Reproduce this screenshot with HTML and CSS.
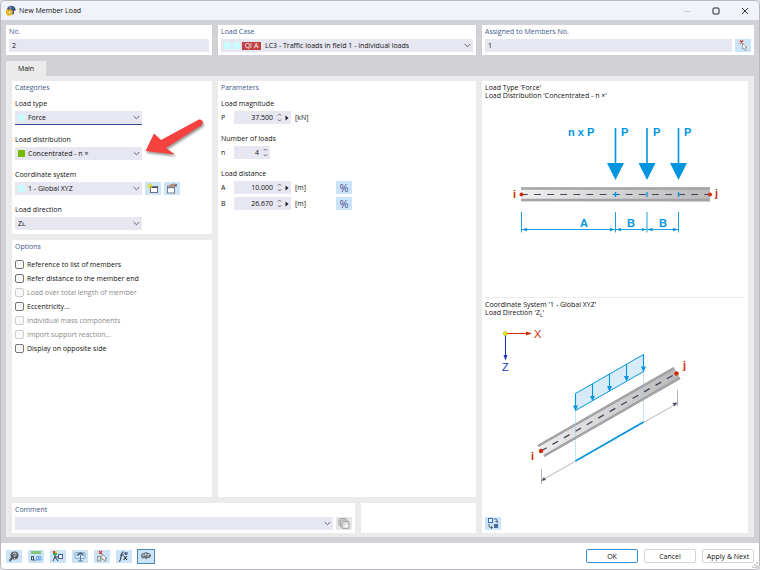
FILE: index.html
```html
<!doctype html>
<html lang="en">
  <head>
    <meta charset="utf-8">
    <title>New Member Load</title>
    <link rel="stylesheet" href="styles.css">
  </head>
  <body>
    <div class="window">
      <header class="titlebar">
        <svg class="app-icon" width="11" height="11" viewBox="0 0 11 11">
          <path d="M1 4 C2 0 8 0 9 3 L10 5 L8 6 L8 9 L5 10 Z" fill="#3c5580"/>
          <path d="M2 3 L5 1 L6 4 Z" fill="#7790b4"/>
          <path d="M0 4 L3 5 L4 4 L7 6 L6 10 L2 11 L0 9 Z" fill="#efb927"/>
          <circle cx="3.5" cy="7.5" r="1.4" fill="#fff0a0" stroke="#a3822c" stroke-width=".5"/>
        </svg>
        <h1>New Member Load</h1>
        <div class="window-buttons">
          <button aria-label="Minimize"><svg width="8" height="8" viewBox="0 0 8 8"><path d="M1 4.5H7" stroke="#c9cbd2"/></svg></button>
          <button aria-label="Maximize"><svg width="8" height="8" viewBox="0 0 8 8"><rect x="1" y="1" width="6" height="6" rx="1" fill="none" stroke="#222"/></svg></button>
          <button aria-label="Close"><svg width="8" height="8" viewBox="0 0 8 8"><path d="M1 1L7 7M7 1L1 7" stroke="#222" stroke-width=".9"/></svg></button>
        </div>
      </header>

      <main>
        <div class="top-row">
          <section class="panel">
            <label class="panel-title" for="no">No.</label>
            <input class="field" id="no" type="text" value="2">
          </section>
          <section class="panel">
            <label class="panel-title" for="load-case">Load Case</label>
            <div class="combo load-case">
              <select id="load-case"><option>LC3 - Traffic loads in field 1 - individual loads</option></select>
              <div class="marks"><i class="swatch"></i><i class="swatch"></i><span class="badge">QI A</span></div>
              <svg class="chevron" viewBox="0 0 7 5"><path d="M.7 1L3.5 3.8L6.3 1"/></svg>
            </div>
          </section>
          <section class="panel">
            <label class="panel-title" for="members">Assigned to Members No.</label>
            <div class="row">
              <input class="field" id="members" type="text" value="1">
              <button class="tool" aria-label="Select members"><svg viewBox="0 0 16 13"><path d="M5 1.500L8 4.500M8 1.500L5 4.500" stroke="#e22929" stroke-width="1.2"/><path d="M7.500 4.500V10L9 9L10.500 11.500L11.500 11L10.500 8.500H12Z" fill="#fff" stroke="#777" stroke-width=".6"/></svg></button>
            </div>
          </section>
        </div>

        <nav class="tabs"><button class="tab">Main</button></nav>

        <div class="page">
          <div class="forms">
            <div class="columns">
              <div class="left">
                <section class="panel categories">
                  <h2 class="panel-title">Categories</h2>
                  <div class="group">
                    <label for="type">Load type</label>
                    <div class="combo marked active">
                      <select id="type"><option>Force</option></select>
                      <div class="marks"><i class="swatch"></i></div>
                      <svg class="chevron" viewBox="0 0 7 5"><path d="M.7 1L3.5 3.8L6.3 1"/></svg>
                    </div>
                  </div>
                  <div class="group">
                    <label for="distribution">Load distribution</label>
                    <div class="combo marked">
                      <select id="distribution"><option>Concentrated - n ×</option></select>
                      <div class="marks"><i class="swatch green"></i></div>
                      <svg class="chevron" viewBox="0 0 7 5"><path d="M.7 1L3.5 3.8L6.3 1"/></svg>
                    </div>
                  </div>
                  <div class="group">
                    <label for="system">Coordinate system</label>
                    <div class="row">
                      <div class="combo marked">
                        <select id="system"><option>1 - Global XYZ</option></select>
                        <div class="marks"><i class="swatch"></i></div>
                        <svg class="chevron" viewBox="0 0 7 5"><path d="M.7 1L3.5 3.8L6.3 1"/></svg>
                      </div>
                      <button class="tool" aria-label="New coordinate system"><svg viewBox="0 0 16 13"><rect x="5.500" y="4.500" width="7" height="6" fill="#fff" stroke="#6b7083"/><path d="M5 5.500H13" stroke="#4b5170"/><path d="M5 1V7M2 4H8M3 2L7 6M7 2L3 6" stroke="#e0d91c" stroke-width=".9"/></svg></button>
                      <button class="tool" aria-label="Edit coordinate system"><svg viewBox="0 0 16 13"><rect x="3.500" y="4" width="7" height="7" fill="#fff" stroke="#777b88"/><path d="M3 5.500H10" stroke="#777b88" stroke-width="1.400"/><path d="M5 3L9 1.500L12 2V4.500L9 4.500L7 6Z" fill="#b58b77"/><path d="M11 2H13V4.500H11" fill="#6d7f9c"/></svg></button>
                    </div>
                  </div>
                  <div class="group">
                    <label for="direction">Load direction</label>
                    <div class="combo">
                      <select id="direction"><option>Zʟ</option></select>
                      <svg class="chevron" viewBox="0 0 7 5"><path d="M.7 1L3.5 3.8L6.3 1"/></svg>
                    </div>
                  </div>
                  <svg class="pointer" viewBox="0 0 62 42">
                    <path d="M1.500 34L10 16.500L17 23L54 3C58 1 61 6 57 8.500L22 31L31 37.500Z"/>
                  </svg>
                </section>

                <section class="panel options">
                  <h2 class="panel-title">Options</h2>
                  <label><input type="checkbox">Reference to list of members</label>
                  <label><input type="checkbox">Refer distance to the member end</label>
                  <label><input type="checkbox" disabled>Load over total length of member</label>
                  <label><input type="checkbox">Eccentricity...</label>
                  <label><input type="checkbox" disabled>Individual mass components</label>
                  <label><input type="checkbox" disabled>Import support reaction...</label>
                  <label><input type="checkbox">Display on opposite side</label>
                </section>
              </div>

              <section class="panel parameters">
                <h2 class="panel-title">Parameters</h2>
                <div class="group">
                  <h3>Load magnitude</h3>
                  <div class="param">
                    <label for="p">P</label>
                    <div class="spin">
                      <input id="p" type="text" value="37.500">
                      <button aria-label="Step P"><svg width="5" height="9" viewBox="0 0 5 9"><path d="M1 2.500L2.500 1L4 2.500M1 6.500L2.500 8L4 6.500"/></svg></button>
                      <button aria-label="More P"><svg width="4" height="6" viewBox="0 0 4 6"><path class="solid" d="M.5.500L3.500 3L.5 5.500Z"/></svg></button>
                    </div>
                    <span>[kN]</span>
                  </div>
                </div>
                <div class="group">
                  <h3>Number of loads</h3>
                  <div class="param">
                    <label for="n">n</label>
                    <div class="spin short">
                      <input id="n" type="text" value="4">
                      <button aria-label="Step n"><svg width="5" height="9" viewBox="0 0 5 9"><path d="M1 2.500L2.500 1L4 2.500M1 6.500L2.500 8L4 6.500"/></svg></button>
                    </div>
                  </div>
                </div>
                <div class="group">
                  <h3>Load distance</h3>
                  <div class="param">
                    <label for="a">A</label>
                    <div class="spin">
                      <input id="a" type="text" value="10.000">
                      <button aria-label="Step A"><svg width="5" height="9" viewBox="0 0 5 9"><path d="M1 2.500L2.500 1L4 2.500M1 6.500L2.500 8L4 6.500"/></svg></button>
                      <button aria-label="More A"><svg width="4" height="6" viewBox="0 0 4 6"><path class="solid" d="M.5.500L3.500 3L.5 5.500Z"/></svg></button>
                    </div>
                    <span class="unit">[m]</span>
                    <button class="tool percent">%</button>
                  </div>
                  <div class="param">
                    <label for="b">B</label>
                    <div class="spin">
                      <input id="b" type="text" value="26.670">
                      <button aria-label="Step B"><svg width="5" height="9" viewBox="0 0 5 9"><path d="M1 2.500L2.500 1L4 2.500M1 6.500L2.500 8L4 6.500"/></svg></button>
                      <button aria-label="More B"><svg width="4" height="6" viewBox="0 0 4 6"><path class="solid" d="M.5.500L3.500 3L.5 5.500Z"/></svg></button>
                    </div>
                    <span class="unit">[m]</span>
                    <button class="tool percent">%</button>
                  </div>
                </div>
              </section>
            </div>

            <div class="comment-row">
              <section class="panel">
                <label class="panel-title" for="comment">Comment</label>
                <div class="row">
                  <div class="combo">
                    <select id="comment"><option></option></select>
                    <svg class="chevron" viewBox="0 0 7 5"><path d="M.7 1L3.5 3.8L6.3 1"/></svg>
                  </div>
                  <button class="tool" disabled aria-label="Copy comment"><svg viewBox="0 0 16 13"><g fill="#ddd" stroke="#999" stroke-width=".8"><rect x="3" y="1.500" width="7" height="7" rx="1"/><rect x="4.500" y="3" width="7" height="7" rx="1"/><rect x="6" y="4.500" width="7" height="7" rx="1"/></g><rect x="9" y="7.500" width="2.500" height="2.500" fill="#fff"/></svg></button>
                </div>
              </section>
              <section class="panel"></section>
            </div>
          </div>

          <section class="panel preview">
            <div class="figure first">
              <p>Load Type 'Force'<br>Load Distribution 'Concentrated - n ×'</p>
              <svg viewBox="482 110 266 140">
                <defs>
                  <linearGradient id="beam"><stop offset="0" stop-color="#efefef"/><stop offset="1" stop-color="#b9b9b9"/></linearGradient>
                  <marker id="end" viewBox="0 0 6 4" markerUnits="userSpaceOnUse" markerWidth="5" markerHeight="4" refX="6" refY="2" orient="auto-start-reverse"><path d="M0 0L6 2L0 4Z" fill="#0095de"/></marker>
                </defs>
                <path d="M521 187.500H710V201.500H521Z" fill="url(#beam)"/>
                <path d="M521 188.500H710M521 200H710" stroke="#a4a2a8" stroke-width="2.400"/>
                <path d="M521 194.500H708" stroke="#46415d" stroke-width="1.200" stroke-dasharray="6.800 6.300"/>
                <g fill="#0095de" stroke="#0095de">
                  <path d="M615.500 128V165M647 128V165M678.500 128V165" stroke-width="1.600"/>
                  <path d="M607 163H624L615.500 180ZM638.500 163H655.500L647 180ZM670 163H687L678.500 180Z" stroke="none"/>
                  <path d="M615.500 192V197M647 192V197M678.500 192V197M613.500 194.500H617.500" stroke-width="1.300"/>
                  <path d="M521.500 212V232.500M615.500 212V232.500M647 212V232.500M678.500 212V232.500" stroke-width=".9"/>
                  <path d="M522 229.500H615" marker-start="url(#end)" marker-end="url(#end)" stroke-width=".9"/>
                  <path d="M616 229.500H646.500" marker-start="url(#end)" marker-end="url(#end)" stroke-width=".9"/>
                  <path d="M647.500 229.500H678" marker-start="url(#end)" marker-end="url(#end)" stroke-width=".9"/>
                </g>
                <g class="letters blue">
                  <text x="568" y="136">n x P</text><text x="621" y="136">P</text><text x="653" y="136">P</text><text x="684" y="136">P</text>
                  <text x="580" y="227">A</text><text x="627" y="227">B</text><text x="659" y="227">B</text>
                </g>
                <circle cx="521.500" cy="194.500" r="2" fill="#ce2c08"/><circle cx="710" cy="194.500" r="2" fill="#ce2c08"/>
                <g class="letters red"><text x="513" y="198">i</text><text x="715" y="197">j</text></g>
              </svg>
            </div>
            <div class="figure second">
              <p>Coordinate System '1 - Global XYZ'<br>Load Direction 'Z<sub>L</sub>'</p>
              <svg viewBox="482 320 266 180">
                <path d="M505.500 333.500H528" stroke="#ce2c08"/><path d="M526 331.500L532 333.500L526 335.500Z" fill="#ce2c08"/>
                <path d="M505.500 334V357" stroke="#1c35bd"/><path d="M503.500 355H507.500L505.500 360.500Z" fill="#1c35bd"/>
                <circle cx="505.300" cy="333.500" r="2" fill="#e5e800" stroke="#a2a520" stroke-width=".5"/>
                <text class="axis red" x="534" y="338">X</text><text class="axis navy" x="502" y="371">Z</text>
                <path d="M538 446L674 368L680 378L544 456Z" fill="url(#beam)"/>
                <path d="M538 446L674 368M544 456L680 378" stroke="#929197" stroke-width="2.300"/>
                <path d="M538 446L674 368M544 456L680 378" stroke="#b8b7bc" stroke-width=".8"/>
                <path d="M541 451L677 373" stroke="#46415d" stroke-width="1.300" stroke-dasharray="6.500 6.700"/>
                <path d="M575.500 393.500L643.500 354.500V371.500L575.500 410.500Z" fill="#d7ecf8" stroke="#0095de"/>
                <path d="M575.500 393.500V408M592.500 384V398M609.500 374V388M626.500 364V378M643.500 354.500V368" stroke="#0095de" stroke-width="1.100"/>
                <path d="M573 405.500H578L575.500 411ZM590 396H595L592.500 401ZM607 386H612L609.500 391.500ZM624 376H629L626.500 381.500ZM641 366.500H646L643.500 372Z" fill="#0095de"/>
                <path d="M575.500 411V461M643.500 372V421" stroke="#7cc8ee" stroke-width=".8" stroke-dasharray="1.300 1"/>
                <path d="M541.500 480.500L677 403.500M541.500 469V484M677.500 390V406" stroke="#a2a1a7" stroke-width=".8"/>
                <path d="M541 481L544 477L546 480ZM677.500 402.500L672.500 403L674.500 406.500Z" fill="#55516a"/>
                <path d="M575.500 461L643.500 422" stroke="#0095de" stroke-width="1.500"/>
                <circle cx="541" cy="451" r="2.200" fill="#ce2c08"/><circle cx="676.500" cy="373.500" r="2.200" fill="#ce2c08"/>
                <g class="letters red"><text x="531" y="460">i</text><text x="683" y="369">j</text></g>
              </svg>
            </div>
            <button class="tool" aria-label="Switch picture"><svg viewBox="0 0 16 13"><rect x="3.500" y="1.500" width="4" height="4" fill="#fff" stroke="#376ed4"/><rect x="9" y="7" width="4" height="4" fill="#496a9c"/><path d="M9 2H10.500Q12 2 12 4V5M10.500 4L12 5.500L13 4M4 7V9Q4 10.500 6 10.500H7M6 9L7.500 10.500L6 12" fill="none" stroke="#4a5265" stroke-width=".9"/></svg></button>
          </section>
        </div>
      </main>

      <footer>
        <div class="tools">
          <button class="tool" aria-label="Help"><svg viewBox="0 0 16 13"><circle cx="8.500" cy="5.500" r="4" fill="#5b6168"/><path d="M6 8L3.500 11" stroke="#5b6168" stroke-width="2"/><path d="M7 4.500Q7 3 8.500 3Q10 3 10 4.500L8.500 6V7M8.500 8V9" fill="none" stroke="#e1edf5" stroke-width=".9"/></svg></button>
          <button class="tool" aria-label="Units"><svg viewBox="0 0 16 13"><path d="M3 1H13V4H3Z" fill="#85c47c"/><path d="M3.500 6.500H5.500V10H3.500ZM7 9.500V11" fill="none" stroke="#38495b"/><path d="M8.500 6.500H10.500V10H8.500ZM11 6.500H13V10H11Z" fill="none" stroke="#4d94df" stroke-width=".8"/></svg></button>
          <button class="tool" aria-label="Display"><svg viewBox="0 0 16 13"><path d="M3 1H5V3H3Z" fill="#e13131"/><path d="M5 1H7V3H5Z" fill="#e4d22c"/><path d="M3 3H7V5H3Z" fill="#3eaa45"/><path d="M5 5V8M5 7L3 11M5 7L8 11M5 7H9" fill="none" stroke="#343842"/><rect x="8.500" y="4.500" width="4" height="4" fill="#fff" stroke="#405c9c"/></svg></button>
          <button class="tool" aria-label="Rotate view"><svg viewBox="0 0 16 13"><rect x="3" y="2.500" width="10" height="6" rx="1" fill="none" stroke="#8baac2"/><path d="M4.500 5Q8 .5 11.500 4V6L9.500 4.500H7.500L6 6Z" fill="#465e80"/><path d="M8.500 5V11M6 11H11" stroke="#667e95"/></svg></button>
          <button class="tool" aria-label="Pick"><svg viewBox="0 0 16 13"><path d="M5 1L8 4M8 1L5 4" stroke="#df3434" stroke-width="1.200"/><rect x="3.500" y="6.500" width="3" height="4.500" fill="#ddd" stroke="#888" stroke-width=".8"/><path d="M8 4V10L9.500 9L11 11.500L12 11L11 8.500H13Z" fill="#fff" stroke="#777" stroke-width=".7"/></svg></button>
          <button class="tool" aria-label="Formula"><svg viewBox="0 0 16 13"><path d="M8 2Q6 1.500 5.500 5L4.500 9Q4 11.500 3 11M4 5H8M8 6L11 10M11 6L7.500 10" fill="none" stroke="#303c4f" stroke-width="1.100"/><path d="M8 3Q10 1 12 3L11 5H9Z" fill="#566a8d"/></svg></button>
          <button class="tool pressed" aria-label="Preview"><svg viewBox="0 0 16 13"><path d="M3 6Q3 3 6 3L8 2L10 3Q13 3 13 5.500Q13 8 10 8L8 9.500L7 8L4 8.500Z" fill="#66717b"/><path d="M5 4V7M7.500 3V6M10 4V7M5 5L12 4.500" stroke="#c8d5dc" stroke-width=".7"/></svg></button>
        </div>
        <div class="actions">
          <button class="default">OK</button>
          <button>Cancel</button>
          <button>Apply &amp; Next</button>
        </div>
      </footer>
      <svg class="grip" viewBox="0 0 6 6"><path d="M4 0H6V2H4ZM2 2H4V4H2ZM4 3H6V6H4ZM0 4H2V6H0ZM2 5H4V6H2Z"/></svg>
    </div>
  </body>
</html>
```
FILE: styles.css
```css
* {
  margin: 0;
  padding: 0;
  box-sizing: border-box;
}

body {
  background: #dcdce2;
  color: #111;
  font-family: "Open Sans", "DejaVu Sans", sans-serif;
  font-size: 7px;
  line-height: 9px;
}

button,
input,
select {
  font: inherit;
  color: inherit;
  border: none;
  background: none;
  outline: none;
}

h1,
h2,
h3 {
  font-size: inherit;
  font-weight: normal;
}

.window {
  position: relative;
  display: flex;
  flex-direction: column;
  min-height: 100vh;
  border: 1px solid #b9b9bd;
  border-radius: 5px;
  background: #d1d1d6;
  overflow: hidden;
}

.titlebar {
  display: flex;
  align-items: center;
  height: 19px;
  padding: 0 10px 0 5px;
  background: #f1f3fb;
}

.titlebar h1 {
  margin-left: 2px;
}

.window-buttons {
  display: flex;
  gap: 21px;
  margin-left: auto;
}

.window-buttons button {
  width: 8px;
  height: 8px;
}

svg {
  display: block;
}

main {
  flex: 1;
  display: flex;
  flex-direction: column;
  padding: 5px 5px 6px;
}

.top-row {
  display: grid;
  grid-template-columns: 206fr 258fr 272fr;
  gap: 6px;
}

.panel {
  padding: 2px 3px 3px;
  background: #fff;
}

.panel-title {
  display: block;
  height: 12px;
  line-height: 9px;
  color: #3f588a;
}

.row {
  display: flex;
  gap: 3px;
}

.field {
  display: block;
  width: 100%;
  height: 13px;
  padding: 0 3px;
  background: #e7e7f2;
}

.combo {
  position: relative;
  flex: 1;
  height: 13px;
  background: #e7e7f2;
}

.combo select {
  display: block;
  width: 100%;
  height: 100%;
  padding: 0 14px 0 3px;
  appearance: none;
}

.combo.marked select {
  padding-left: 13px;
}

.combo.load-case select {
  padding-left: 44px;
}

.combo.active {
  height: 14px;
  border-bottom: 1px solid #39499a;
}

/* colour marks and the arrow sit over the select */
.marks {
  position: absolute;
  top: 3px;
  left: 3px;
  display: flex;
  gap: 2px;
  pointer-events: none;
}

.swatch {
  width: 7px;
  height: 7px;
  background: #c9fcfc;
}

.swatch.green {
  background: #79b800;
}

.badge {
  width: 19px;
  height: 8px;
  line-height: 8px;
  text-align: center;
  color: #fff;
  background: #c24143;
}

.chevron {
  position: absolute;
  top: 4px;
  right: 2px;
  width: 7px;
  height: 5px;
  fill: none;
  stroke: #555;
  stroke-width: 0.9;
  pointer-events: none;
}

.tool {
  flex: none;
  width: 16px;
  height: 13px;
  background: #cce4f7;
}

.tool svg {
  width: 100%;
  height: 100%;
}

.tool:disabled {
  background: #e6e6e6;
}

.tabs {
  margin-top: 6px;
}

.tab {
  display: block;
  width: 40px;
  height: 15px;
  background: #ebebeb;
}

.page {
  flex: 1;
  display: grid;
  grid-template-columns: 464fr 266fr;
  gap: 6px;
  padding: 5px 6px 4px;
  background: #ebebeb;
}

.forms {
  display: flex;
  flex-direction: column;
  gap: 6px;
}

.columns {
  flex: 1;
  display: grid;
  grid-template-columns: 200fr 258fr;
  gap: 6px;
}

.left {
  display: flex;
  flex-direction: column;
  gap: 6px;
}

.categories {
  position: relative;
  padding-bottom: 4px;
}

.group {
  margin-top: 4px;
  margin-bottom: 10px;
}

.group:last-of-type {
  margin-bottom: 0;
}

.group > label,
.group > h3 {
  display: block;
  height: 12px;
}

.categories .combo {
  max-width: 127px;
}

.pointer {
  position: absolute;
  top: 36px;
  left: 132px;
  width: 62px;
  height: 42px;
  fill: #f5423f;
  filter: drop-shadow(1px 2px 1px #0006);
  pointer-events: none;
}

.options {
  flex: 1;
}

.options label {
  display: flex;
  align-items: center;
  gap: 3px;
  height: 14px;
}

.options .panel-title {
  height: 15px;
}

.options input {
  appearance: none;
  width: 9px;
  height: 9px;
  border: 1px solid #777;
  border-radius: 2px;
  background: #f8f8f8;
}

.options label:has(:disabled) {
  color: #8a8a8a;
}

.options input:disabled {
  border-color: #ccc;
}

.param {
  display: flex;
  align-items: center;
  height: 13px;
  margin-bottom: 3px;
}

.param label {
  width: 13px;
}

.spin {
  display: flex;
  align-items: center;
  gap: 3px;
  width: 57px;
  height: 13px;
  margin-right: 4px;
  padding-right: 2px;
  background: #e7e7f2;
}

.spin.short {
  width: 36px;
}

.spin input {
  flex: 1;
  width: 0;
  padding-right: 1px;
  text-align: right;
}

.spin svg {
  fill: none;
  stroke: #444;
  stroke-width: 0.8;
}

.spin .solid {
  fill: #222;
  stroke: none;
}

.param .unit {
  width: 41px;
}

.percent {
  font-size: 11px;
  line-height: 13px;
  color: #504b91;
}

.comment-row {
  display: grid;
  grid-template-columns: 343fr 115fr;
  gap: 6px;
}

.preview {
  display: flex;
  flex-direction: column;
}

.figure svg {
  width: calc(100% + 6px);
  margin: 0 -3px;
}

.figure p {
  line-height: 8px;
}

.first {
  min-height: 215px;
  padding-top: 1px;
  border-bottom: 1px solid #ebebeb;
}

.first p {
  margin-bottom: 10px;
}

.second {
  padding-top: 3px;
}

.second p {
  margin-bottom: 3px;
}

.preview sub {
  font-size: 5px;
  line-height: 1px;
}

.preview .tool {
  margin-top: auto;
}

.letters {
  font: bold 11px "Liberation Sans", sans-serif;
}

.axis {
  font: 11px "Liberation Sans", sans-serif;
}

.blue {
  fill: #0095de;
}

.red {
  fill: #ce2c08;
}

.navy {
  fill: #1c35bd;
}

footer {
  display: flex;
  justify-content: space-between;
  align-items: center;
  height: 26px;
  padding: 0 5px;
  background: #fff;
}

.tools,
.actions {
  display: flex;
  gap: 6px;
}

.pressed {
  outline: 1px solid #4b84b8;
}

.actions button {
  width: 52px;
  height: 14px;
  border: 1px solid #d4d4d4;
  border-radius: 2px;
  background: #fff;
}

.actions .default {
  border-color: #3c91d5;
}

/* resize handle in the window corner */
.grip {
  position: absolute;
  right: 1px;
  bottom: 1px;
  width: 6px;
  height: 6px;
  fill: #d0d0d4;
}
```
